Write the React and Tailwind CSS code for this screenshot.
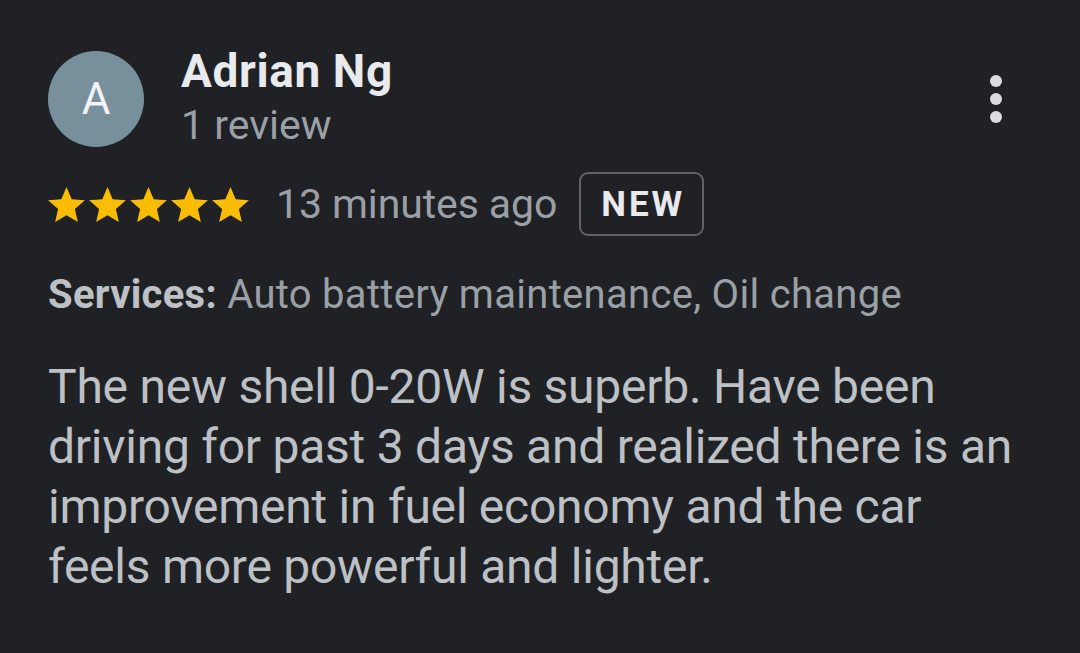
import React from "react";

function Star() {
  return (
    <svg width="37" height="35" viewBox="2 2 20 19" className="block">
      <path
        d="M12 17.27L18.18 21l-1.64-7.03L22 9.24l-7.19-.61L12 2 9.19 8.63 2 9.24l5.46 4.73L5.82 21z"
        fill="#fbbc04"
      />
    </svg>
  );
}

export default function App() {
  return (
    <div
      className="w-[1080px] h-[653px] bg-[#202124] overflow-hidden"
      style={{ fontFamily: "Roboto, 'Noto Sans', sans-serif" }}
    >
      <div className="pl-[48px] pr-[40px] pt-[48px]">
        <div className="flex items-start">
          <div className="mt-[3px] w-[96px] h-[96px] rounded-full bg-[#78909c] flex items-center justify-center text-[#f1f3f4] text-[44px] leading-none shrink-0">
            A
          </div>
          <div className="ml-[37px] flex-1">
            <div className="text-[46px] leading-[46px] font-bold text-[#e8eaed] tracking-[0.6px]">Adrian Ng</div>
            <div className="text-[41px] leading-[41px] text-[#9aa0a6] mt-[11px]">1 review</div>
          </div>
          <div className="flex flex-col items-center gap-[6px] mt-[27px] mr-[38px]">
            <span className="w-[12px] h-[12px] rounded-full bg-[#dadce0]" />
            <span className="w-[12px] h-[12px] rounded-full bg-[#dadce0]" />
            <span className="w-[12px] h-[12px] rounded-full bg-[#dadce0]" />
          </div>
        </div>
        <div className="flex items-center mt-[25px]">
          <div className="flex gap-[4px]">
            <Star /><Star /><Star /><Star /><Star />
          </div>
          <span className="ml-[27px] text-[41px] text-[#9aa0a6] leading-[41px] tracking-[-0.1px]">13 minutes ago</span>
          <span className="ml-[22px] h-[64px] w-[125px] flex items-center justify-center border-2 border-[#5f6368] rounded-[9px] text-[35px] font-bold text-[#e8eaed] leading-none tracking-[3px] pl-[3px]">
            NEW
          </span>
        </div>
        <div className="mt-[39px] text-[40px] leading-[40px] text-[#9aa0a6] tracking-[0.3px]">
          <span className="font-bold text-[#bdc1c6]">Services:</span> Auto battery maintenance, Oil change
        </div>
        <div className="mt-[42px] text-[48px] leading-[60px] text-[#bdc1c6] w-[980px] tracking-[-0.25px]">
          The new shell 0-20W is superb. Have been driving for past 3 days and realized there is an improvement in fuel economy and the car feels more powerful and lighter.
        </div>
      </div>
    </div>
  );
}
